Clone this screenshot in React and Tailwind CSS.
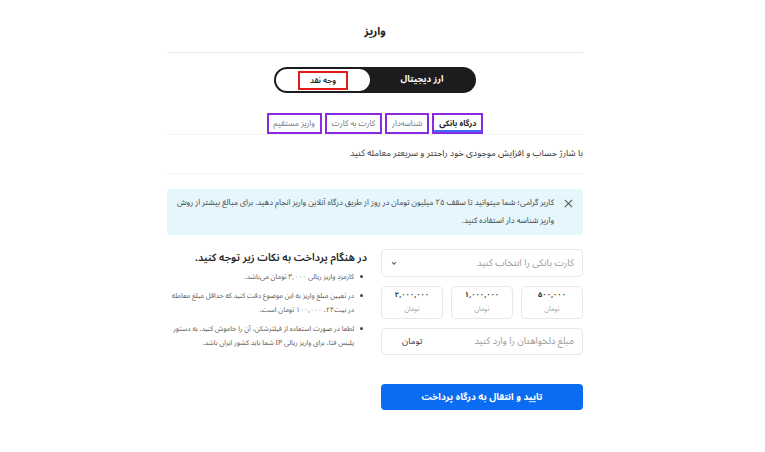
import React from "react";

const tabs = [
  { label: "درگاه بانکی", active: true },
  { label: "شناسه‌دار" },
  { label: "کارت به کارت" },
  { label: "واریز مستقیم" },
];

const amounts = ["۵۰۰,۰۰۰", "۱,۰۰۰,۰۰۰", "۲,۰۰۰,۰۰۰"];

const notes = [
  "کارمزد واریز ریالی ۳,۰۰۰ تومان می‌باشد.",
  "در تعیین مبلغ واریز به این موضوع دقت کنید که حداقل مبلغ معامله در بیت۲۴، ۱۰۰,۰۰۰ تومان است.",
  "لطفا در صورت استفاده از فیلترشکن، آن را خاموش کنید. به دستور پلیس فتا، برای واریز ریالی IP شما باید کشور ایران باشد.",
];

const App = () => {
  return (
    <div
      dir="rtl"
      className="min-h-[452px] w-[750px] bg-white text-[#222]"
      style={{ fontFamily: '"Noto Sans Arabic", "DejaVu Sans", sans-serif' }}
    >
      <div className="mx-auto w-[416px]">
        {/* Header */}
        <div className="pt-[24px] pb-[12px] text-center text-[11px] font-bold leading-[16px]">
          واریز
        </div>
        <div className="h-px bg-gray-200" />

        {/* Switch */}
        <div className="mx-auto mt-[14px] flex h-[26px] w-[202px] items-center rounded-full bg-[#1c1c1e] p-[2px]">
          <div className="flex flex-1 items-center justify-center text-[9px] font-bold text-white">
            ارز دیجیتال
          </div>
          <div className="flex h-[22px] w-[94px] items-center justify-center rounded-full bg-white">
            <span className="border-2 border-[#e01b1b] px-[10px] py-[1px] text-[8px] font-semibold leading-[13px]">
              وجه نقد
            </span>
          </div>
        </div>

        {/* Tabs */}
        <div className="mt-[20px] flex justify-center gap-[3px] border-b border-gray-100">
          {tabs.map((t) => (
            <div
              key={t.label}
              className={`flex h-[21px] items-center border-2 border-[#8a2be2] px-[5px] text-[8px] ${
                t.active ? "font-bold text-[#222] shadow-[inset_0_-2px_0_#3b6ff5]" : "text-[#777]"
              }`}
            >
              {t.label}
            </div>
          ))}
        </div>

        <p className="mt-[11px] text-[9px] leading-[16px] text-[#333]">
          با شارژ حساب و افزایش موجودی خود راحتتر و سریعتر معامله کنید
        </p>
        <div className="mt-[11px] h-px bg-gray-100" />

        {/* Alert */}
        <div className="mt-[15px] flex gap-[9px] rounded-[4px] bg-[#e6f6fd] px-[9px] py-[5px]">
          <svg width="11" height="11" viewBox="0 0 12 12" className="mt-[4px] shrink-0" fill="none" stroke="#555" strokeWidth="1.2">
            <path d="M2 2l8 8M10 2l-8 8" />
          </svg>
          <p className="text-[8px] leading-[18px] text-[#444]">
            کاربر گرامی؛ شما میتوانید تا سقف ۲۵ میلیون تومان در روز از طریق درگاه آنلاین واریز انجام دهید. برای مبالغ بیشتر از روش واریز شناسه دار استفاده کنید.
          </p>
        </div>

        {/* Body */}
        <div className="mt-[14px] flex gap-[14px]">
          {/* Form */}
          <div className="w-[202px] shrink-0">
            <div className="flex h-[28px] items-center justify-between rounded-[5px] border border-gray-200 px-[8px]">
              <span className="text-[9.5px] text-[#999]">کارت بانکی را انتخاب کنید</span>
              <svg width="8" height="8" viewBox="0 0 10 10" fill="none" stroke="#666" strokeWidth="1.3">
                <path d="M2.5 4l2.5 2.5L7.5 4" />
              </svg>
            </div>
            <div className="mt-[9px] grid grid-cols-3 gap-[8px]">
              {amounts.map((a) => (
                <div
                  key={a}
                  className="flex h-[33px] flex-col items-center justify-center gap-[5px] rounded-[5px] border border-gray-200"
                >
                  <span className="text-[7.5px] font-bold leading-[9px] text-[#333]">{a}</span>
                  <span className="text-[6.5px] leading-[9px] text-[#999]">تومان</span>
                </div>
              ))}
            </div>
            <div className="mt-[9px] flex h-[27px] items-center justify-between rounded-[5px] border border-gray-200 px-[8px]">
              <span className="text-[9.5px] text-[#999]">مبلغ دلخواهتان را وارد کنید</span>
              <span className="ml-[12px] text-[9px] text-[#333]">تومان</span>
            </div>
          </div>

          {/* Notes */}
          <div className="flex-1 pt-[1px]">
            <h3 className="text-[10.5px] font-semibold leading-[16px] text-[#222]">
              در هنگام پرداخت به نکات زیر توجه کنید.
            </h3>
            <ul className="mt-[4px] space-y-[5px] pr-[4px] text-[7px] leading-[14px] text-[#555]">
              {notes.map((n) => (
                <li key={n} className="flex gap-[6px]">
                  <span className="mt-[5px] h-[3px] w-[3px] shrink-0 rounded-full bg-[#444]" />
                  <span>{n}</span>
                </li>
              ))}
            </ul>
          </div>
        </div>

        {/* Submit */}
        <div className="mt-[29px] flex">
          <button className="flex h-[26px] w-[202px] items-center justify-center rounded-[4px] bg-[#0b6cf2] text-[9.5px] font-bold text-white">
            تایید و انتقال به درگاه پرداخت
          </button>
        </div>
      </div>
    </div>
  );
};

export default App;
